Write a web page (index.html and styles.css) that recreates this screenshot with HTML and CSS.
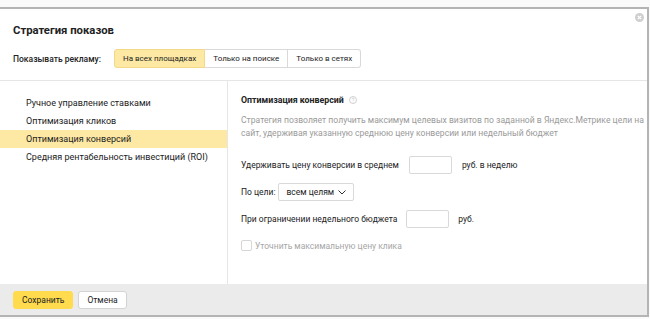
FILE: index.html
```html
<!DOCTYPE html>
<html lang="ru">
<head>
  <meta charset="UTF-8" />
  <meta name="viewport" content="width=device-width,initial-scale=1.0" />
  <title>Стратегия показов</title>
  <link rel="stylesheet" href="styles.css">
</head>
<body>
  <div class="dialog">
    <button class="close" title="Закрыть">
      <svg width="9" height="9" viewBox="0 0 9 9">
        <circle cx="4.5" cy="4.5" r="4.5" fill="#cfcfcf"/>
        <path d="M2.8 2.8l3.4 3.4M6.2 2.8l-3.4 3.4" stroke="#fff" stroke-width="1.2"/>
      </svg>
    </button>

    <div class="head">
      <h1>Стратегия показов</h1>
      <div class="platforms">
        <span class="platforms-label">Показывать рекламу:</span>
        <div class="seg">
          <button class="seg-btn active">На всех площадках</button>
          <button class="seg-btn">Только на поиске</button>
          <button class="seg-btn">Только в сетях</button>
        </div>
      </div>
    </div>

    <div class="body">
      <ul class="strategies">
        <li>Ручное управление ставками</li>
        <li>Оптимизация кликов</li>
        <li class="selected">Оптимизация конверсий</li>
        <li>Средняя рентабельность инвестиций (ROI)</li>
      </ul>

      <div class="settings">
        <h2>Оптимизация конверсий
          <svg class="help" width="8" height="8" viewBox="0 0 8 8">
            <circle cx="4" cy="4" r="3.5" fill="none" stroke="#c4c4c4" stroke-width="0.8"/>
            <path d="M2.9 3.1c0-.7.5-1.1 1.1-1.1s1.1.4 1.1 1c0 .8-1.1.8-1.1 1.6" fill="none" stroke="#c4c4c4" stroke-width="0.7"/>
            <circle cx="4" cy="5.9" r="0.4" fill="#c4c4c4"/>
          </svg>
        </h2>
        <p class="desc">Стратегия позволяет получить максимум целевых визитов по заданной в Яндекс.Метрике цели на сайт, удерживая указанную среднюю цену конверсии или недельный бюджет</p>

        <div class="row">
          <span>Удерживать цену конверсии в среднем</span>
          <input class="num" type="text">
          <span>руб. в неделю</span>
        </div>
        <div class="row row-goal">
          <span>По цели:</span>
          <button class="select">всем целям
            <svg width="8" height="5" viewBox="0 0 8 5"><path d="M.5.5L4 4 7.5.5" fill="none" stroke="#333" stroke-width="1"/></svg>
          </button>
        </div>
        <div class="row">
          <span>При ограничении недельного бюджета</span>
          <input class="num" type="text">
          <span>руб.</span>
        </div>
        <label class="check">
          <span class="box"></span>
          Уточнить максимальную цену клика
        </label>
      </div>
    </div>

    <div class="footer">
      <button class="btn btn-save">Сохранить</button>
      <button class="btn">Отмена</button>
    </div>
  </div>
</body>
</html>
```

FILE: styles.css
```css
body {
  margin: 0;
  background-color: #fafafa;
  font-family: Roboto, Arial, sans-serif;
  color: #222;
  font-size: 9px;
}
.dialog {
  position: relative;
  margin-top: 7px;
  width: 647px;
  background-color: white;
  border-top: 2px solid #b4b4b4;
  border-right: 2px solid #b4b4b4;
  border-bottom: 2px solid #b4b4b4;
}
button {
  font-family: inherit;
  color: inherit;
}
.close {
  position: absolute;
  top: 4px;
  right: 3px;
  padding: 0;
  border: none;
  background: none;
  line-height: 0;
}
.head {
  height: 58px;
  padding: 13px 13px 0;
  border-bottom: 1px solid #e6e6e6;
}
.head h1 {
  margin: 0;
  font-size: 11.3px;
  line-height: 18px;
  font-weight: 700;
}
.platforms {
  display: flex;
  align-items: center;
  margin-top: 9px;
}
.platforms-label {
  width: 101px;
  white-space: nowrap;
  font-size: 8.5px;
  font-weight: 500;
}
.seg {
  display: flex;
}
.seg-btn {
  height: 19px;
  padding: 0 8px;
  border: 1px solid #d9d9d9;
  border-left: none;
  background-color: white;
  font-size: 8px;
}
.seg-btn:first-child {
  border-left: 1px solid #d9d9d9;
  border-radius: 3px 0 0 3px;
}
.seg-btn:last-child { border-radius: 0 3px 3px 0; }
.seg-btn.active {
  background-color: #fde9a3;
  border-color: #f2d98a;
}
.body {
  display: flex;
  height: 203px;
}
.strategies {
  width: 227px;
  margin: 0;
  padding: 13px 0 0;
  list-style: none;
  border-right: 1px solid #e6e6e6;
}
.strategies li {
  height: 18px;
  line-height: 18px;
  padding-left: 26px;
}
.strategies li.selected { background-color: #fde9a3; }
.settings {
  flex: 1;
  padding: 12px 2px 0 13px;
  font-size: 8.5px;
}
.settings h2 {
  margin: 0;
  font-size: 8.8px;
  line-height: 14px;
  font-weight: 700;
}
.help { margin-left: 3px; vertical-align: -1px; }
.desc {
  margin: 7px 0 0;
  font-size: 8.6px;
  line-height: 13px;
  color: #9a9a9a;
}
.row {
  display: flex;
  align-items: center;
  gap: 10px;
  margin-top: 9px;
}
.desc + .row { margin-top: 16px; }
.row:last-of-type { gap: 9px; }
.num {
  width: 43px;
  height: 18px;
  box-sizing: border-box;
  border: 1px solid #d9d9d9;
  border-radius: 2px;
  padding: 0;
}
.row-goal { gap: 3px; }
.select {
  display: flex;
  align-items: center;
  gap: 4px;
  height: 18px;
  padding: 0 7px;
  border: 1px solid #d9d9d9;
  border-radius: 2px;
  background-color: white;
  font-size: 8.5px;
}
.check {
  display: flex;
  align-items: center;
  gap: 3px;
  margin-top: 12px;
  color: #a6a6a6;
}
.box {
  width: 9px;
  height: 9px;
  border: 1px solid #d6d6d6;
  border-radius: 2px;
}
.footer {
  display: flex;
  gap: 5px;
  padding: 7px 13px 6px;
  background-color: #ebebeb;
}
.btn {
  height: 18px;
  padding: 0 8px;
  border: 1px solid #d3d3d3;
  border-radius: 3px;
  background-color: white;
  font-size: 8.5px;
}
.btn-save {
  background-color: #ffdb4d;
  border-color: #ffdb4d;
}
```
